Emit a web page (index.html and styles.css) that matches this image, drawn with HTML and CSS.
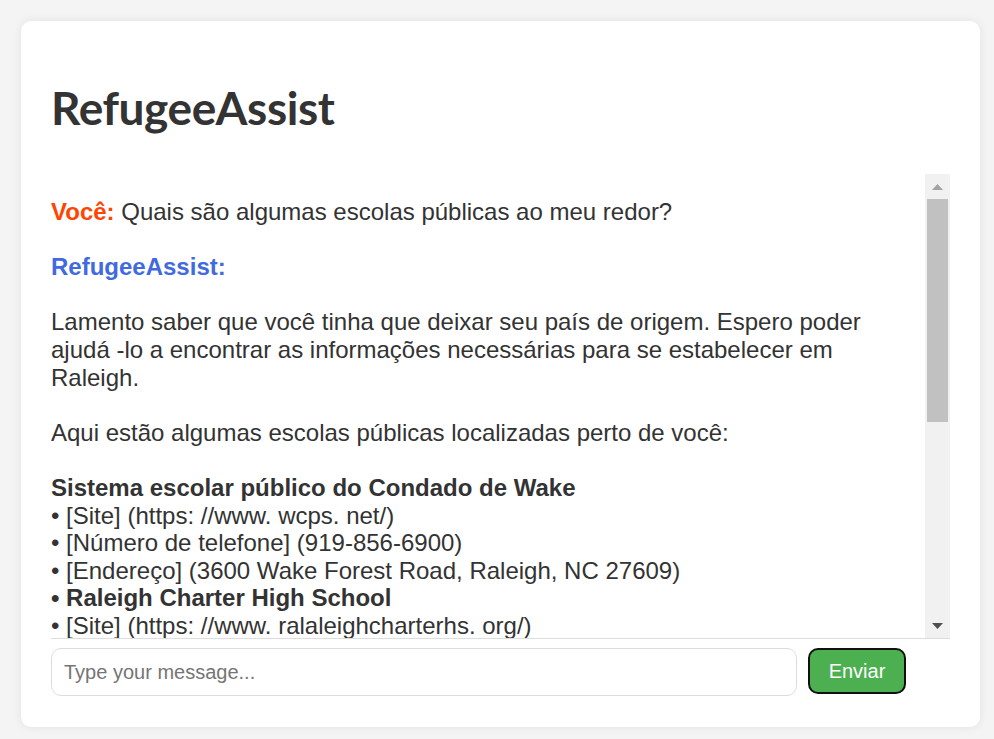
FILE: index.html
```html
<!DOCTYPE html>
<html lang="pt">
<head>
<meta charset="utf-8">
<title>RefugeeAssist</title>
<link rel="stylesheet" href="styles.css">
</head>
<body>
<div class="card">
  <h1 class="title">RefugeeAssist</h1>
  <div class="chat">
    <div class="log">
      <div class="msg">
        <p><span class="you">Você:</span> Quais são algumas escolas públicas ao meu redor?</p>
      </div>
      <div class="msg">
        <p><span class="bot">RefugeeAssist:</span></p>
        <p>Lamento saber que você tinha que deixar seu país de origem. Espero poder ajudá -lo a encontrar as informações necessárias para se estabelecer em Raleigh.</p>
        <p>Aqui estão algumas escolas públicas localizadas perto de você:</p>
        <p><b>Sistema escolar público do Condado de Wake</b><br>
        • [Site] (https: //www. wcps. net/)<br>
        • [Número de telefone] (919-856-6900)<br>
        • [Endereço] (3600 Wake Forest Road, Raleigh, NC 27609)<br>
        <b>• Raleigh Charter High School</b><br>
        • [Site] (https: //www. ralaleighcharterhs. org/)<br>
        • [Número de telefone] (919-715-1155)<br>
        • [Endereço] (1111 Haynes Street, Raleigh, NC 27604)</p>
      </div>
    </div>
    <div class="scrollbar" aria-hidden="true">
      <div class="sb-btn"><svg width="11" height="6" viewBox="0 0 11 6"><polygon points="0,6 11,6 5.5,0" fill="#a3a3a3"/></svg></div>
      <div class="sb-thumb"></div>
      <div class="sb-rest"></div>
      <div class="sb-btn"><svg width="11" height="6" viewBox="0 0 11 6"><polygon points="0,0 11,0 5.5,6" fill="#505050"/></svg></div>
    </div>
  </div>
  <div class="composer">
    <input class="field" type="text" placeholder="Type your message...">
    <button class="send" type="button">Enviar</button>
  </div>
</div>
</body>
</html>
```

FILE: styles.css
```css
html, body {
  margin: 0;
  padding: 0;
}
body {
  background: #f4f4f4;
  font-family: "Liberation Sans", Arial, sans-serif;
  color: #333;
  padding: 21px 14px 12px 21px;
}
.card {
  background: #fff;
  border-radius: 10px;
  box-shadow: 0 0 10px rgba(0, 0, 0, 0.08);
  padding: 30px;
  height: 646px;
}
.title {
  font-family: Lato, "Noto Sans", sans-serif;
  font-weight: 700;
  font-size: 46px;
  line-height: 54px;
  margin: 30px 0 39px 0;
  color: #333;
  letter-spacing: -0.4px;
}
.chat {
  display: flex;
  height: 464px;
  border-bottom: 1px solid #ddd;
}
.log {
  flex: 1;
  overflow: hidden;
  padding-top: 24px;
  font-size: 24px;
  line-height: 27.6px;
}
.msg p {
  margin: 0 0 27.6px 0;
}
.you {
  color: #ff4500;
  font-weight: 700;
}
.bot {
  color: #4169e1;
  font-weight: 700;
}
.scrollbar {
  width: 25px;
  background: #f1f1f1;
  display: flex;
  flex-direction: column;
}
.sb-btn {
  height: 25px;
  display: flex;
  align-items: center;
  justify-content: center;
}
.sb-btn svg {
  display: block;
}
.sb-thumb {
  height: 223px;
  margin: 0 2px;
  background: #c1c1c1;
}
.sb-rest {
  flex: 1;
}
.composer {
  display: flex;
  align-items: center;
  gap: 11px;
  padding-top: 9px;
}
.field {
  width: 746px;
  height: 48px;
  box-sizing: border-box;
  border: 1px solid #ddd;
  border-radius: 10px;
  padding: 0 12px;
  font-family: "Liberation Sans", Arial, sans-serif;
  font-size: 20px;
  color: #333;
  outline: none;
}
.field::placeholder {
  color: #757575;
}
.send {
  width: 98px;
  height: 46px;
  box-sizing: border-box;
  background: #4caf50;
  color: #fff;
  border: 2px solid #111;
  border-radius: 10px;
  font-family: "Liberation Sans", Arial, sans-serif;
  font-size: 20px;
  padding: 0;
  margin-top: -2px;
}
```
